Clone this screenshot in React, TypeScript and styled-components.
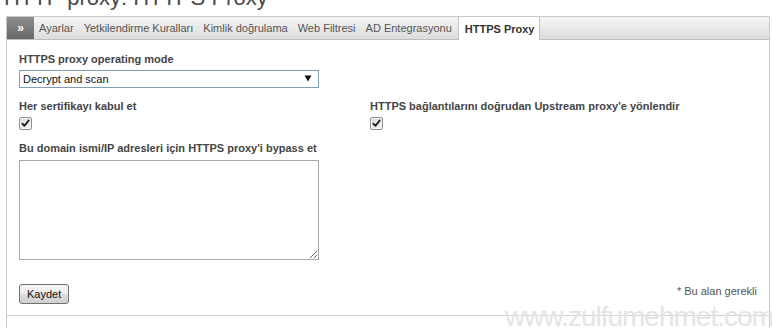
import styled, { createGlobalStyle } from 'styled-components';

const font = `'Liberation Sans', Arial, sans-serif`;

const GlobalStyle = createGlobalStyle`
  html, body {
    margin: 0;
    padding: 0;
    background: #fff;
    overflow: hidden;
  }
  body {
    font-family: ${font};
    color: #444;
  }
`;

const tabs = [
  'Ayarlar',
  'Yetkilendirme Kuralları',
  'Kimlik doğrulama',
  'Web Filtresi',
  'AD Entegrasyonu',
];

function CheckBox() {
  return (
    <Check role="checkbox" aria-checked="true">
      <svg width="9" height="9" viewBox="0 0 9 9">
        <path
          d="M1.3 4.6 L3.4 6.9 L7.8 1.4"
          fill="none"
          stroke="#1a1a1a"
          strokeWidth="1.7"
          strokeLinecap="round"
          strokeLinejoin="round"
        />
      </svg>
    </Check>
  );
}

function App() {
  return (
    <>
      <GlobalStyle />
      <Page>
        <Title>HTTP proxy: HTTPS Proxy</Title>
        <Panel>
          <TabBar>
            <Toggle>»</Toggle>
            {tabs.map((t) => (
              <Tab key={t}>{t}</Tab>
            ))}
            <Tab $active>HTTPS Proxy</Tab>
          </TabBar>

          <Content>
            <Field>
              <Label>HTTPS proxy operating mode</Label>
              <SelectWrap>
                <Select defaultValue="scan">
                  <option value="scan">Decrypt and scan</option>
                </Select>
                <Arrow width="8" height="7" viewBox="0 0 8 7">
                  <path d="M0.5 0.5 H7.5 L4 6.5 Z" fill="#111" />
                </Arrow>
              </SelectWrap>
            </Field>

            <Row $gap={12}>
              <Field $width={351}>
                <Label>Her sertifikayı kabul et</Label>
                <CheckBox />
              </Field>
              <Field>
                <Label>HTTPS bağlantılarını doğrudan Upstream proxy'e yönlendir</Label>
                <CheckBox />
              </Field>
            </Row>

            <Field $gap={12}>
              <Label $space={5}>Bu domain ismi/IP adresleri için HTTPS proxy'i bypass et</Label>
              <TextArea />
            </Field>

            <Actions>
              <SaveButton type="button">Kaydet</SaveButton>
              <Required>* Bu alan gerekli</Required>
            </Actions>
          </Content>
          <Footer />
        </Panel>
        <Watermark>www.zulfumehmet.com</Watermark>
      </Page>
    </>
  );
}

export default App;

const Page = styled.div`
  position: relative;
  display: flow-root;
  padding-left: 6px;
  height: 328px;
`;

const Title = styled.h1`
  margin: -13px 0 0 -2px;
  height: 22px;
  font-size: 22px;
  line-height: 22px;
  font-weight: normal;
  color: #4a4a4a;
  white-space: nowrap;
`;

const Panel = styled.div`
  margin-top: 7px;
  width: 764px;
  box-sizing: border-box;
  border: 1px solid #c9c9c9;
  border-bottom: none;
`;

const TabBar = styled.div`
  display: flex;
  align-items: stretch;
  height: 22px;
  background: linear-gradient(#f6f6f6, #dcdcdc);
  border-bottom: 1px solid #bdbdbd;
`;

const Toggle = styled.div`
  width: 27px;
  display: flex;
  align-items: center;
  justify-content: center;
  background: linear-gradient(#8e8e8e, #676767);
  color: #fff;
  font-size: 12px;
  font-weight: bold;
`;

const Tab = styled.div<{ $active?: boolean }>`
  display: flex;
  align-items: center;
  padding: ${(p) => (p.$active ? '0 5px 0 6px' : '0 5px')};
  margin-left: ${(p) => (p.$active ? '1px' : '0')};
  font-size: 11px;
  white-space: nowrap;
  color: ${(p) => (p.$active ? '#333' : '#555')};
  font-weight: ${(p) => (p.$active ? 'bold' : 'normal')};
  background: ${(p) => (p.$active ? '#fff' : 'transparent')};
  border-left: ${(p) => (p.$active ? '1px solid #c4c4c4' : 'none')};
  border-right: ${(p) => (p.$active ? '1px solid #c4c4c4' : 'none')};
  height: ${(p) => (p.$active ? '23px' : 'auto')};
`;

const Content = styled.div`
  padding: 13px 12px 11px 12px;
`;

const Row = styled.div<{ $gap?: number }>`
  display: flex;
  margin-top: ${(p) => p.$gap ?? 0}px;
`;

const Field = styled.div<{ $width?: number; $gap?: number }>`
  display: flex;
  flex-direction: column;
  align-items: flex-start;
  width: ${(p) => (p.$width ? `${p.$width}px` : 'auto')};
  margin-top: ${(p) => p.$gap ?? 0}px;
`;

const Label = styled.div<{ $space?: number }>`
  font-size: 11px;
  line-height: 13px;
  font-weight: bold;
  color: #454545;
  white-space: nowrap;
  margin-bottom: ${(p) => p.$space ?? 4}px;
`;

const SelectWrap = styled.div`
  position: relative;
  width: 300px;
`;

const Select = styled.select`
  appearance: none;
  display: block;
  width: 300px;
  height: 18px;
  box-sizing: border-box;
  margin: 0;
  padding: 0 0 0 3px;
  border: 1px solid #7f9db9;
  border-radius: 0;
  background: #fff;
  font-family: ${font};
  font-size: 11px;
  color: #111;
  outline: none;
`;

const Arrow = styled.svg`
  position: absolute;
  right: 7px;
  top: 5px;
  pointer-events: none;
`;

const Check = styled.span`
  display: flex;
  align-items: center;
  justify-content: center;
  width: 13px;
  height: 13px;
  box-sizing: border-box;
  border: 1px solid #8e8f8f;
  border-radius: 2px;
  background: linear-gradient(135deg, #d8d8d8, #f6f6f6);
  box-shadow: inset 0 0 0 1px #f4f4f4;
`;

const TextArea = styled.textarea`
  display: block;
  width: 300px;
  height: 100px;
  box-sizing: border-box;
  margin: 0;
  border: 1px solid #a9a9a9;
  background: #fff;
  font-family: ${font};
  font-size: 11px;
  outline: none;
`;

const Actions = styled.div`
  display: flex;
  justify-content: space-between;
  align-items: flex-start;
  margin-top: 24px;
`;

const SaveButton = styled.button`
  height: 20px;
  padding: 0 7px;
  margin: 0;
  border: 1px solid #707070;
  border-radius: 3px;
  background: linear-gradient(#f4f4f4 0%, #ececec 50%, #dddddd 51%, #d0d0d0 100%);
  font-family: ${font};
  font-size: 11px;
  color: #111;
`;

const Required = styled.div`
  font-size: 11px;
  line-height: 13px;
  color: #555;
  margin-top: 1px;
`;

const Footer = styled.div`
  height: 30px;
  border-top: 1px solid #d2d2d2;
`;

const Watermark = styled.div`
  position: absolute;
  left: 505px;
  top: 303px;
  font-family: ${font};
  font-size: 28px;
  line-height: 28px;
  letter-spacing: -1px;
  color: #e4e4e4;
  white-space: nowrap;
  pointer-events: none;
`;
